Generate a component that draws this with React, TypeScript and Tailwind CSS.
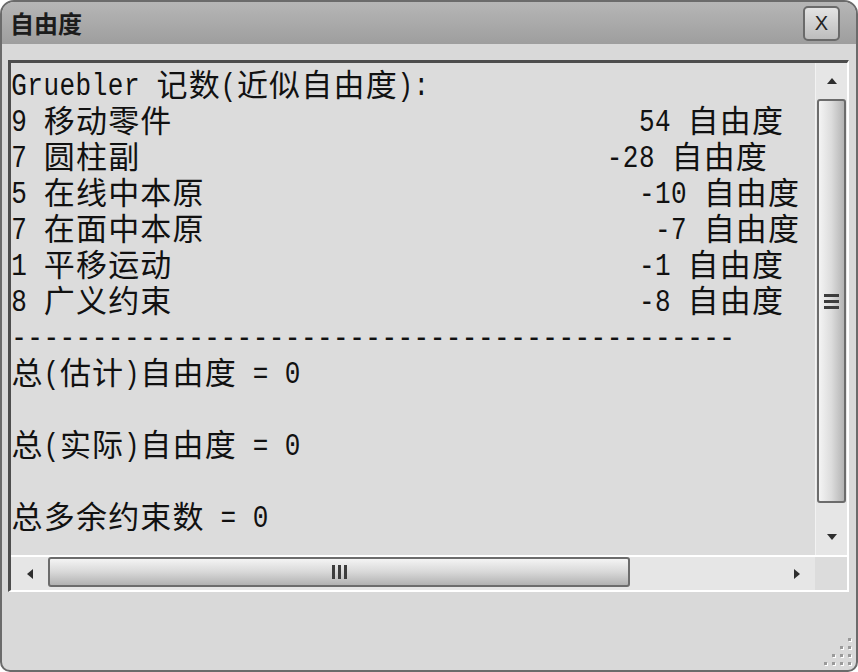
const lines = [
  "Gruebler 记数(近似自由度):",
  "9 移动零件" + " ".repeat(29) + "54 自由度",
  "7 圆柱副" + " ".repeat(29) + "-28 自由度",
  "5 在线中本原" + " ".repeat(27) + "-10 自由度",
  "7 在面中本原" + " ".repeat(28) + "-7 自由度",
  "1 平移运动" + " ".repeat(29) + "-1 自由度",
  "8 广义约束" + " ".repeat(29) + "-8 自由度",
  "-".repeat(45),
  "总(估计)自由度 = 0",
  "",
  "总(实际)自由度 = 0",
  "",
  "总多余约束数 = 0",
];

// one cell per character: half-width 16.1px, CJK double width
function TextLine({ text }: { text: string }) {
  return (
    <div className="flex h-[36px] items-center text-[#111]">
      {Array.from(text).map((c, i) =>
        c.charCodeAt(0) > 0xff ? (
          <span
            key={i}
            className="h-[36px] w-[32.2px] shrink-0 -translate-y-[2px] text-center font-['Noto_Sans_CJK_SC',sans-serif] text-[31px] leading-[36px]"
          >
            {c}
          </span>
        ) : (
          <span
            key={i}
            className="h-[36px] w-[16.1px] shrink-0 translate-y-[2px] scale-y-[1.2] whitespace-pre text-center font-['Liberation_Mono',monospace] text-[26px] leading-[36px]"
          >
            {c}
          </span>
        )
      )}
    </div>
  );
}

function Arrow({ dir }: { dir: "up" | "down" | "left" | "right" }) {
  const pts = {
    up: "0,6 5,0 10,6",
    down: "0,0 10,0 5,6",
    left: "6,0 6,10 0,5",
    right: "0,0 0,10 6,5",
  }[dir];
  const vertical = dir === "up" || dir === "down";
  return (
    <svg width={vertical ? 10 : 6} height={vertical ? 6 : 10} viewBox={vertical ? "0 0 10 6" : "0 0 6 10"}>
      <polygon points={pts} fill="#2e2e2e" />
    </svg>
  );
}

function ResizeGrip() {
  const dots: [number, number][] = [];
  for (let r = 0; r < 4; r++) {
    for (let c = 0; c < 4; c++) {
      if (r + c >= 3) dots.push([c * 8 + 2, r * 8 + 2]);
    }
  }
  return (
    <svg width="34" height="34" viewBox="0 0 34 34">
      {dots.map(([x, y], i) => (
        <g key={i}>
          <rect x={x + 1} y={y + 1} width="3" height="3" fill="#ffffff" />
          <rect x={x} y={y} width="3" height="3" fill="#9a9a9a" />
        </g>
      ))}
    </svg>
  );
}

export default function App() {
  return (
    <div className="h-[672px] w-[858px] bg-white">
      <div className="flex h-full flex-col overflow-hidden rounded-t-[14px] rounded-b-[10px] border-2 border-[#6b6b6b] bg-[#d9d9d9]">

        <div className="flex h-[42px] shrink-0 items-center justify-between bg-gradient-to-b from-[#b6b6b6] to-[#9e9e9e] pl-[8px] pr-[16px]">
          <span className="font-['Noto_Sans_CJK_SC',sans-serif] text-[24px] font-bold leading-none text-[#1c1c1c]">
            自由度
          </span>
          <button className="flex h-[35px] w-[37px] items-center justify-center rounded-[5px] border-2 border-[#6a6a6a] bg-gradient-to-b from-[#e4e4e4] to-[#bdbdbd] font-['Liberation_Sans',sans-serif] text-[20px] leading-none text-[#222]">
            X
          </button>
        </div>

        <div className="relative flex-1 pl-[6px] pr-[7px] pt-[16px]">
          <div className="flex h-[532px] flex-col border-b-2 border-l-[3px] border-r-2 border-t-[3px] border-b-white border-l-[#4d4d4d] border-r-white border-t-[#4d4d4d]">

            <div className="flex h-[492px]">
              <div className="flex-1 overflow-hidden bg-[#dcdcdc] pt-[4px]">
                {lines.map((l, i) => (
                  <TextLine key={i} text={l} />
                ))}
              </div>

              <div className="flex w-[32px] flex-col border-l border-[#f2f2f2] bg-[#e6e6e6]">
                <div className="flex h-[36px] items-center justify-center">
                  <Arrow dir="up" />
                </div>
                <div className="mx-[1px] flex h-[404px] items-center justify-center rounded-[3px] border-2 border-[#6c6c6c] bg-gradient-to-r from-[#f4f4f4] via-[#dcdcdc] to-[#b4b4b4]">
                  <div className="flex flex-col gap-[3px]">
                    <div className="h-[3px] w-[15px] bg-[#3c3c3c]" />
                    <div className="h-[3px] w-[15px] bg-[#3c3c3c]" />
                    <div className="h-[3px] w-[15px] bg-[#3c3c3c]" />
                  </div>
                </div>
                <div className="flex-1" />
                <div className="flex h-[36px] items-center justify-center">
                  <Arrow dir="down" />
                </div>
              </div>
            </div>

            <div className="flex h-[35px] border-t-2 border-white">
              <div className="flex flex-1 bg-[#e6e6e6]">
                <div className="flex w-[37px] items-center justify-center">
                  <Arrow dir="left" />
                </div>
                <div className="flex h-[30px] w-[582px] items-center justify-center rounded-[3px] border-2 border-[#6c6c6c] bg-gradient-to-b from-[#f4f4f4] via-[#d8d8d8] to-[#b2b2b2]">
                  <div className="flex gap-[3px]">
                    <div className="h-[14px] w-[3px] bg-[#3c3c3c]" />
                    <div className="h-[14px] w-[3px] bg-[#3c3c3c]" />
                    <div className="h-[14px] w-[3px] bg-[#3c3c3c]" />
                  </div>
                </div>
                <div className="flex-1" />
                <div className="flex w-[36px] items-center justify-center">
                  <Arrow dir="right" />
                </div>
              </div>
              <div className="w-[32px] bg-[#dcdcdc]" />
            </div>

          </div>

          <div className="absolute bottom-[0px] right-[0px]">
            <ResizeGrip />
          </div>
        </div>

      </div>
    </div>
  );
}
